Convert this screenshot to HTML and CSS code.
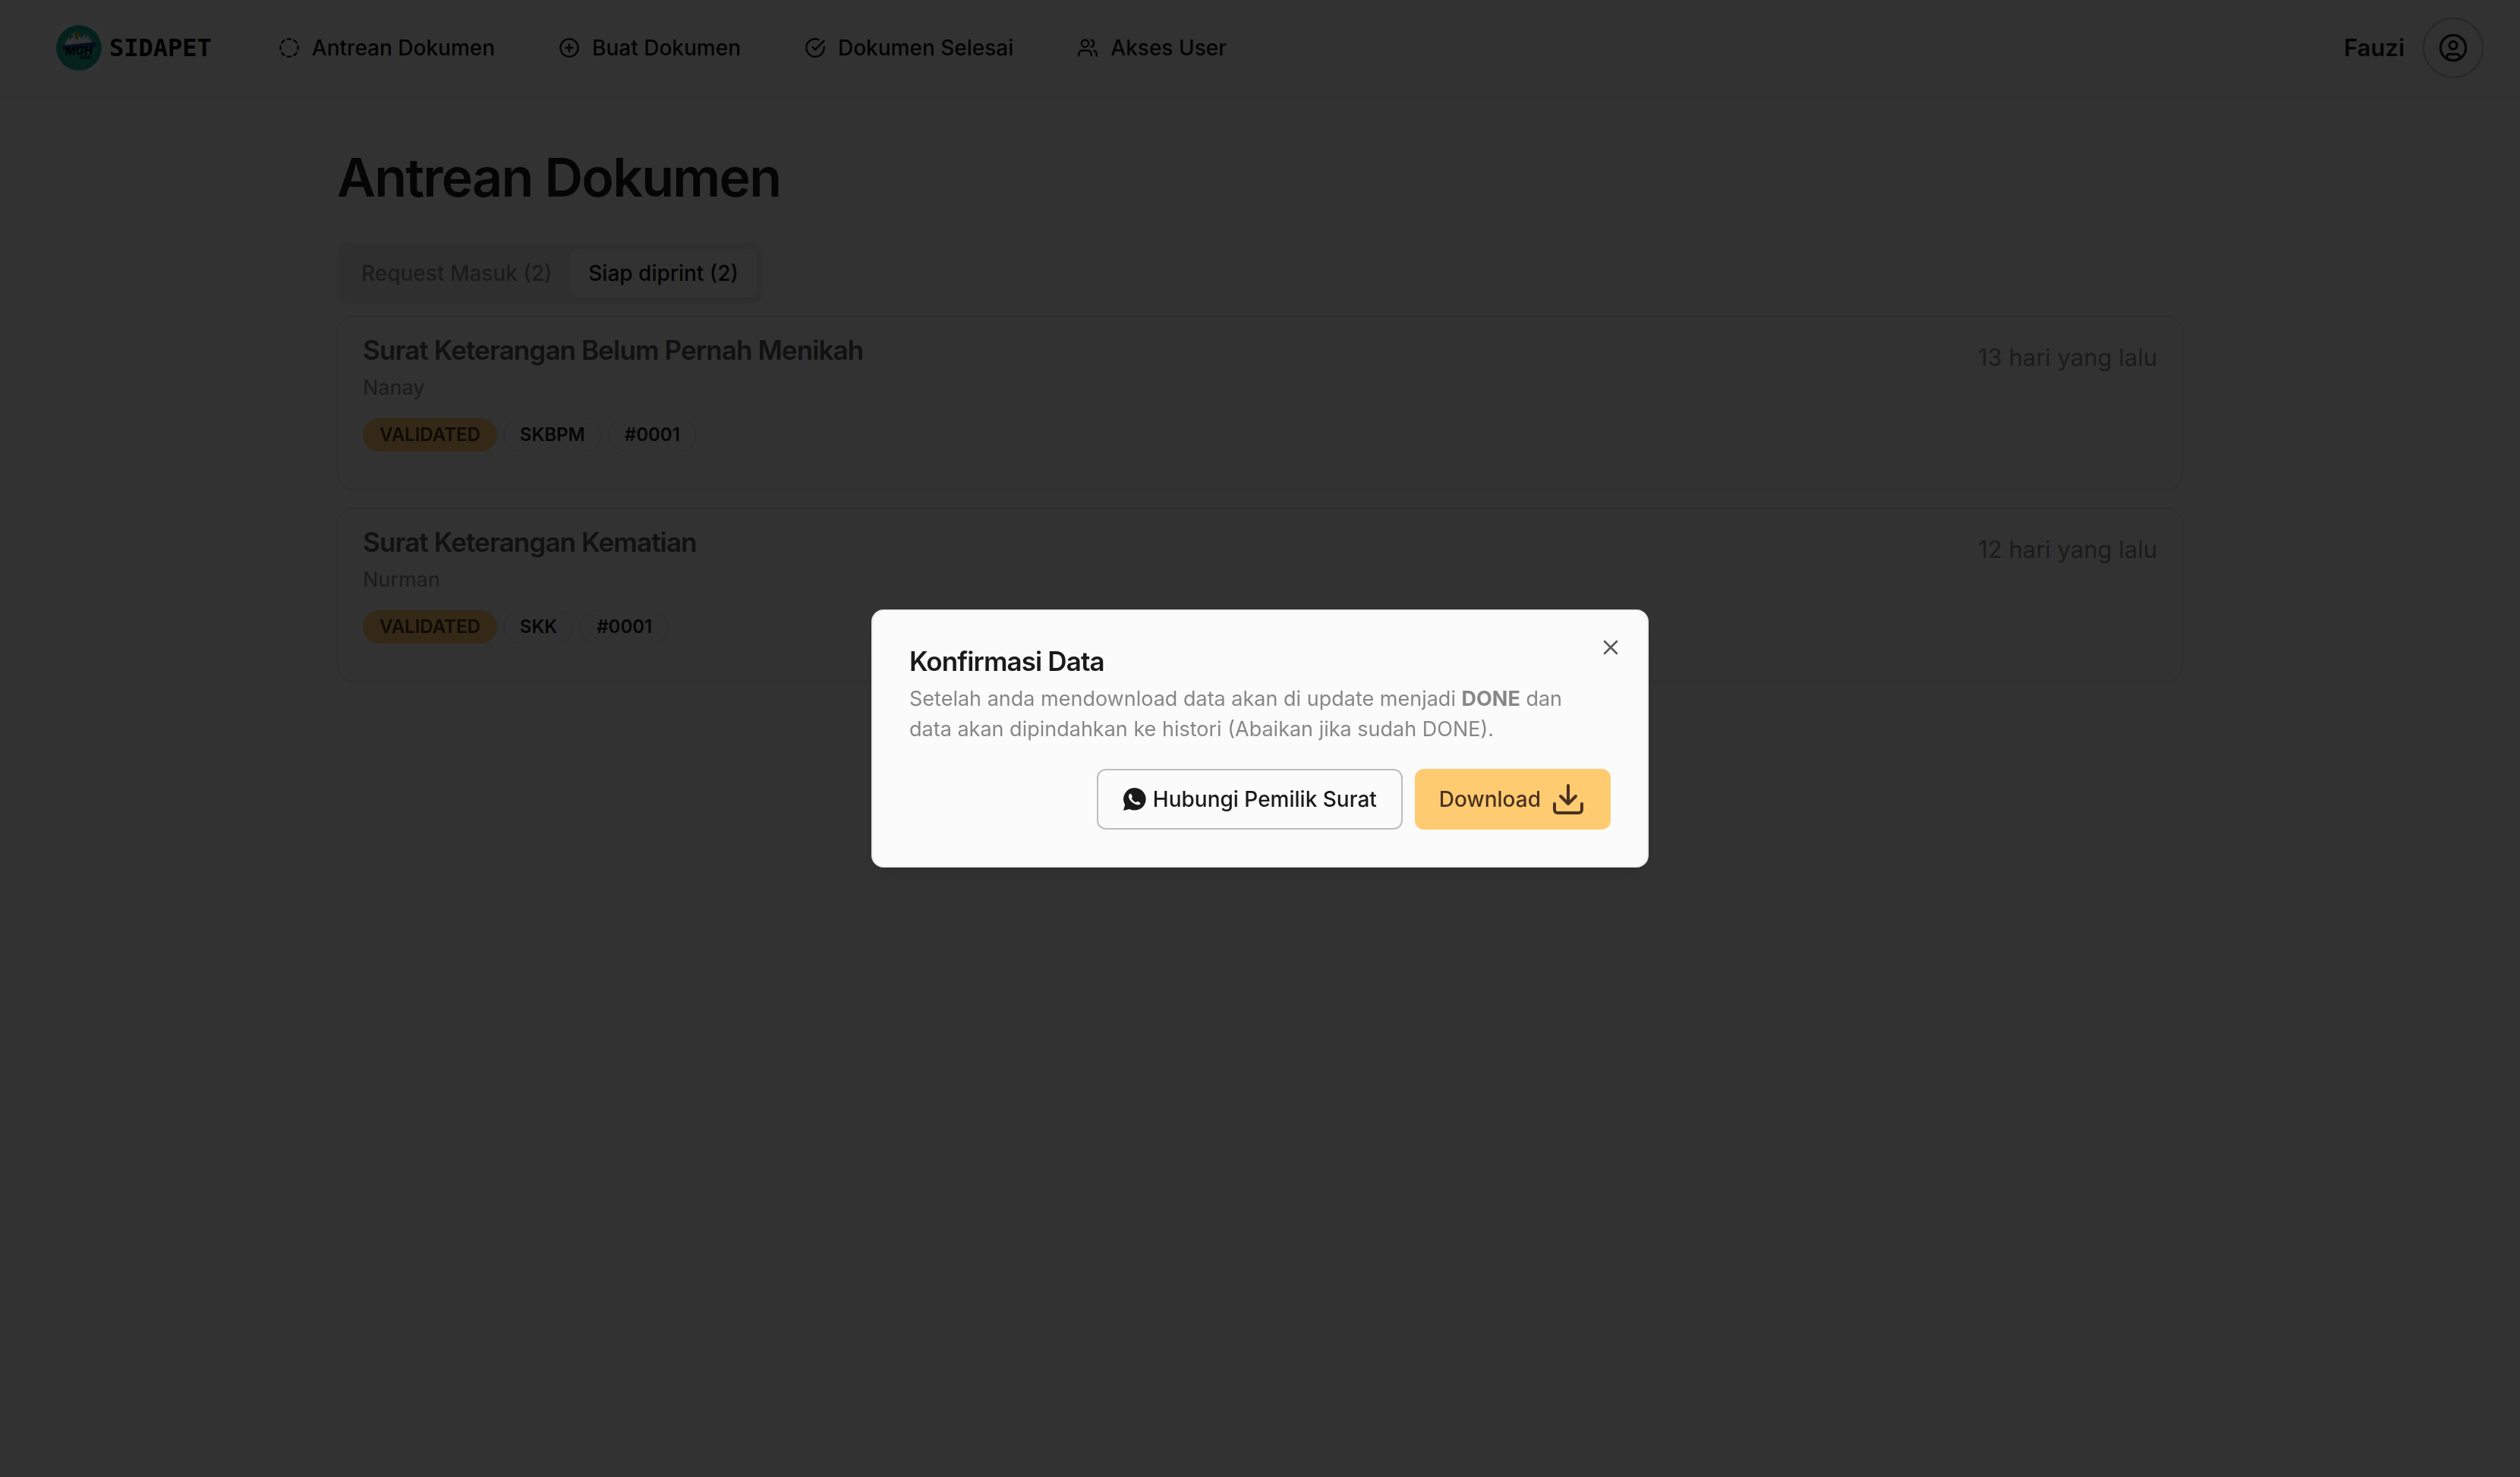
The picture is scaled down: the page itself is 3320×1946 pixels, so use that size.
FILE: index.html
```html
<!DOCTYPE html>
<html lang="id">
<head>
<meta charset="utf-8">
<meta name="viewport" content="width=device-width, initial-scale=1">
<title>SIDAPET - Antrean Dokumen</title>
<link rel="stylesheet" href="styles.css">
</head>
<body>
<header class="topbar">
  <a class="brand" href="#">
    <svg class="brand-logo" viewBox="0 0 60 60" aria-hidden="true">
      <rect width="60" height="60" fill="#fff"/>
      <circle cx="30" cy="30" r="30" fill="#20aa90"/>
      <circle cx="30" cy="30" r="26" fill="none" stroke="#18806e" stroke-width="2" stroke-dasharray="2 2"/>
      <path d="M12 27v-5l2-1v-3l2 1v-3l2 3 2-1v-2h2v-4l1-3 1 3v4h2v3h3v-5h3v4l2-3 1 3 1-6 2 1v4h2l1-4 2 2v5l2-3 1 4v3z" fill="#fff"/>
      <path d="M28 9l3 1v5l-3 2-3-2v-5z" fill="#a8a43c"/>
      <path d="M7 27l46-5v7L9 34z" fill="#1c4a96"/>
      <text x="12" y="40" class="logo-word" transform="rotate(-3 12 40)">MGH</text>
      <text x="31" y="45" class="logo-sub">BISA!</text>
    </svg>
    <span class="brand-name">SIDAPET</span>
  </a>
  <nav class="menu" aria-label="Utama">
    <a class="menu-link" href="#">
      <svg class="icon icon-sm" viewBox="0 0 24 24"><path d="M10.1 2.18a9.93 9.93 0 0 1 3.8 0M17.6 3.71a9.95 9.95 0 0 1 2.69 2.7M21.82 10.1a9.93 9.93 0 0 1 0 3.8M20.29 17.6a9.95 9.95 0 0 1-2.7 2.69M13.9 21.82a9.94 9.94 0 0 1-3.8 0M6.4 20.29a9.95 9.95 0 0 1-2.69-2.7M2.18 13.9a9.93 9.93 0 0 1 0-3.8M3.71 6.4a9.95 9.95 0 0 1 2.7-2.69"/></svg>
      Antrean Dokumen
    </a>
    <a class="menu-link" href="#">
      <svg class="icon icon-sm" viewBox="0 0 24 24"><circle cx="12" cy="12" r="10"/><path d="M8 12h8M12 8v8"/></svg>
      Buat Dokumen
    </a>
    <a class="menu-link" href="#">
      <svg class="icon icon-sm" viewBox="0 0 24 24"><path d="M22 11.08V12a10 10 0 1 1-5.93-9.14"/><path d="m9 11 3 3L22 4"/></svg>
      Dokumen Selesai
    </a>
    <a class="menu-link" href="#">
      <svg class="icon icon-sm" viewBox="0 0 24 24"><path d="M16 21v-2a4 4 0 0 0-4-4H6a4 4 0 0 0-4 4v2"/><circle cx="9" cy="7" r="4"/><path d="M22 21v-2a4 4 0 0 0-3-3.87M16 3.13a4 4 0 0 1 0 7.75"/></svg>
      Akses User
    </a>
  </nav>
  <div class="account">
    <span class="account-name">Fauzi</span>
    <button class="avatar" type="button" aria-label="Akun">
      <svg class="icon icon-md" viewBox="0 0 24 24"><circle cx="12" cy="12" r="10"/><circle cx="12" cy="10" r="3"/><path d="M7 20.662V19a2 2 0 0 1 2-2h6a2 2 0 0 1 2 2v1.662"/></svg>
    </button>
  </div>
</header>

<main class="page">
  <h1 class="page-title">Antrean Dokumen</h1>
  <div class="tabs" role="tablist">
    <button class="tab" type="button" role="tab" aria-selected="false">Request Masuk (2)</button>
    <button class="tab tab-active" type="button" role="tab" aria-selected="true">Siap diprint (2)</button>
  </div>
  <section class="documents">
    <article class="card">
      <div>
        <h2 class="title card-title">Surat Keterangan Belum Pernah Menikah</h2>
        <p class="card-owner">Nanay</p>
        <div class="badges">
          <span class="badge badge-status">VALIDATED</span>
          <span class="badge">SKBPM</span>
          <span class="badge">#0001</span>
        </div>
      </div>
      <p class="card-date">13 hari yang lalu</p>
    </article>
    <article class="card">
      <div>
        <h2 class="title card-title">Surat Keterangan Kematian</h2>
        <p class="card-owner">Nurman</p>
        <div class="badges">
          <span class="badge badge-status">VALIDATED</span>
          <span class="badge">SKK</span>
          <span class="badge">#0001</span>
        </div>
      </div>
      <p class="card-date">12 hari yang lalu</p>
    </article>
  </section>
</main>

<div class="overlay">
  <div class="dialog" role="dialog" aria-modal="true" aria-labelledby="dialog-title" aria-describedby="dialog-text">
    <h2 class="title" id="dialog-title">Konfirmasi Data</h2>
    <p class="dialog-text" id="dialog-text">Setelah anda mendownload data akan di update menjadi <strong>DONE</strong> dan data akan dipindahkan ke histori (Abaikan jika sudah DONE).</p>
    <div class="dialog-actions">
      <button class="button button-outline" type="button">
        <svg class="whatsapp" viewBox="-1 -1 32 32" aria-hidden="true"><path fill="currentColor" d="M15.300 0a14.800 14.800 0 1 1-7.300 27.900L0 30l2.200-7.700A14.800 14.800 0 0 1 15.300 0z"/><path fill="#fbfbfb" d="M8.200 8.200c.9-.6 2-.5 2.400.4l1.200 2.900c.3.800-.6 1.700-1.100 2.300 1.200 2.500 3.200 4.400 5.700 5.500.7-.6 1.600-1.700 2.500-1.300l2.900 1.400c.9.500.6 1.500 0 2.100-1.400 1.200-3.600 1.100-6.200 0-3.800-1.600-7.200-5-8.300-8.300-.6-1.900-.4-4 .9-5z"/></svg>
        Hubungi Pemilik Surat
      </button>
      <button class="button button-primary" type="button">
        Download
        <svg class="icon icon-lg" viewBox="0 0 24 24"><path d="M21 15v4a2 2 0 0 1-2 2H5a2 2 0 0 1-2-2v-4M7 10l5 5 5-5M12 15V3"/></svg>
      </button>
    </div>
    <button class="close" type="button" aria-label="Tutup">
      <svg class="icon icon-x" viewBox="0 0 24 24"><path d="M18 6 6 18M6 6l12 12"/></svg>
    </button>
  </div>
</div>
</body>
</html>
```
FILE: styles.css
```css
:root {
  --bg: #fafafa;
  --fg: #1a1a1a;
  --muted: #878787;
  --border: #ebebeb;
  --primary: #fecb70;
  --primary-fg: #4a3222;
}

* {
  box-sizing: border-box;
}

body {
  margin: 0;
  min-height: 100vh;
  background: var(--bg);
  color: var(--fg);
  font-family: Inter, "Liberation Sans", sans-serif;
  font-size: 28px;
  line-height: 40px;
}

h1, h2, p {
  margin: 0;
}

a {
  color: inherit;
  text-decoration: none;
}

button {
  font: inherit;
  color: inherit;
  border: 0;
  background: none;
  padding: 0;
}

.icon {
  flex: none;
  fill: none;
  stroke: currentColor;
  stroke-width: 2;
  stroke-linecap: round;
  stroke-linejoin: round;
}

.icon-sm { width: 28px; height: 28px; }
.icon-x { width: 32px; height: 32px; }
.icon-md { width: 40px; height: 40px; }
.icon-lg { width: 48px; height: 48px; }

.topbar {
  display: flex;
  align-items: center;
  height: 128px;
  padding: 0 48px 0 74px;
  border-bottom: 2px solid var(--border);
}

.brand {
  display: flex;
  align-items: center;
  gap: 10px;
  color: #000;
}

.brand-logo {
  width: 60px;
  height: 60px;
}

.logo-word {
  font: italic 700 15px Inter, sans-serif;
}

.logo-sub {
  font: italic 700 6px Inter, sans-serif;
}

.brand-name {
  font-family: "DejaVu Sans Mono", monospace;
  font-size: 32px;
  font-weight: 700;
}

.menu {
  display: flex;
  gap: 84px;
  margin-left: 88px;
  color: #111;
  font-weight: 500;
}

.menu-link {
  display: flex;
  align-items: center;
  gap: 16px;
}

.account {
  display: flex;
  align-items: center;
  gap: 24px;
  margin-left: auto;
}

.account-name {
  font-size: 31px;
  font-weight: 600;
}

.avatar {
  display: grid;
  place-items: center;
  width: 80px;
  height: 80px;
  border: 2px solid #bdbdbd;
  border-radius: 50%;
}

.page {
  max-width: 2560px;
  margin: 0 auto;
  padding: 66px 64px;
}

.page-title {
  font-size: 70px;
  line-height: 80px;
  font-weight: 600;
  letter-spacing: -0.025em;
}

.tabs {
  display: flex;
  width: fit-content;
  margin-top: 46px;
  padding: 8px;
  border-radius: 16px;
  background: #ebebeb;
  color: var(--muted);
}

.tab {
  padding: 12px 24px;
  border-radius: 10px;
  font-weight: 500;
}

.tab-active {
  background: var(--bg);
  color: #111;
  box-shadow: 0 2px 4px rgba(0, 0, 0, 0.05);
}

.documents {
  display: grid;
  gap: 24px;
  margin-top: 16px;
}

.card {
  display: flex;
  justify-content: space-between;
  padding: 25px 32px 48px;
  border: 2px solid var(--border);
  border-radius: 20px;
  box-shadow: 0 2px 4px rgba(0, 0, 0, 0.05);
}

.title {
  font-size: 35px;
  line-height: 36px;
  font-weight: 600;
  letter-spacing: -0.025em;
}

.card-title {
  color: #555;
}

.card-owner {
  margin-top: 12px;
  color: var(--muted);
  font-size: 27px;
}

.badges {
  display: flex;
  gap: 8px;
  margin-top: 20px;
}

.badge {
  padding: 4px 20px;
  border: 2px solid var(--border);
  border-radius: 22px;
  font-size: 24px;
  line-height: 32px;
  font-weight: 600;
}

.badge-status {
  border-color: var(--primary);
  background: var(--primary);
  color: var(--primary-fg);
}

.card-date {
  margin-top: 8px;
  color: var(--muted);
  font-size: 31px;
}

.overlay {
  position: fixed;
  inset: 0;
  display: grid;
  place-items: center;
  background: rgba(0, 0, 0, 0.8);
}

.dialog {
  position: relative;
  width: 100%;
  max-width: 1024px;
  padding: 48px;
  border: 2px solid var(--border);
  border-radius: 16px;
  background: #fbfbfb;
  box-shadow: 0 20px 30px -6px rgba(0, 0, 0, 0.1), 0 8px 12px -8px rgba(0, 0, 0, 0.1);
}

.dialog-text {
  margin-top: 12px;
  padding-right: 32px;
  color: var(--muted);
  font-size: 27px;
}

.dialog-actions {
  display: flex;
  justify-content: flex-end;
  gap: 16px;
  margin-top: 32px;
}

.button {
  display: flex;
  align-items: center;
  height: 80px;
  padding: 0 32px;
  border-radius: 12px;
  font-weight: 500;
}

.button-outline {
  gap: 8px;
  border: 2px solid #bdbdbd;
}

.button-primary {
  gap: 12px;
  background: var(--primary);
  color: var(--primary-fg);
}

.whatsapp {
  width: 32px;
  height: 32px;
}

.close {
  position: absolute;
  top: 32px;
  right: 32px;
  display: flex;
  opacity: 0.7;
}
```
